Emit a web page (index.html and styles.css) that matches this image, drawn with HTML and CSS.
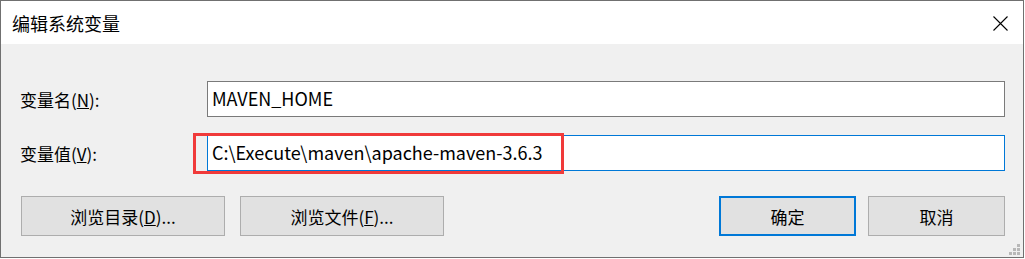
FILE: index.html
```html
<!DOCTYPE html>
<html lang="zh-CN">
<head>
<meta charset="UTF-8">
<title>编辑系统变量</title>
<link rel="stylesheet" href="styles.css">
</head>
<body>

<div class="dialog">
  <div class="titlebar">
    <span class="title">编辑系统变量</span>
    <svg class="close" width="15" height="15" viewBox="0 0 15 15">
      <path d="M0.5 0.5 L14.5 14.5 M14.5 0.5 L0.5 14.5" stroke="#000" stroke-width="1.1" fill="none"/>
    </svg>
  </div>

  <div class="content">
    <div class="row">
      <label class="label">变量名(<u>N</u>):</label>
      <div class="field">MAVEN_HOME</div>
    </div>
    <div class="row">
      <label class="label">变量值(<u>V</u>):</label>
      <div class="field focused">
        C:\Execute\maven\apache-maven-3.6.3
        <div class="mark"></div>
      </div>
    </div>

    <div class="buttons">
      <div class="left">
        <button class="btn wide">浏览目录(<u>D</u>)...</button>
        <button class="btn wide">浏览文件(<u>F</u>)...</button>
      </div>
      <div class="right">
        <button class="btn default">确定</button>
        <button class="btn">取消</button>
      </div>
    </div>
  </div>

  <svg class="grip" width="11" height="11" viewBox="0 0 11 11">
    <rect x="8" y="0" width="3" height="3" fill="#b8b8b8"/>
    <rect x="4" y="4" width="3" height="3" fill="#b8b8b8"/>
    <rect x="8" y="4" width="3" height="3" fill="#b8b8b8"/>
    <rect x="0" y="8" width="3" height="3" fill="#b8b8b8"/>
    <rect x="4" y="8" width="3" height="3" fill="#b8b8b8"/>
    <rect x="8" y="8" width="3" height="3" fill="#b8b8b8"/>
  </svg>
</div>

</body>
</html>
```

FILE: styles.css
```css
body {
  margin: 0;
  background: #fff;
  font-family: "Noto Sans CJK SC", "Noto Sans", sans-serif;
  color: #000;
}
.dialog {
  position: relative;
  width: 1024px;
  height: 258px;
  box-sizing: border-box;
  border: 1px solid #707070;
  background: #f0f0f0;
}
.titlebar {
  height: 43px;
  background: #fff;
  display: flex;
  align-items: center;
  justify-content: space-between;
  padding: 0 15px 0 11px;
}
.title {
  font-size: 18px;
  line-height: 24px;
  margin-top: 1px;
}
.close {
  display: block;
  margin-top: 2px;
}
.content {
  padding: 37px 18px 0 19px;
}
.row {
  display: flex;
  align-items: center;
  margin-bottom: 18px;
}
.label {
  width: 187px;
  font-size: 17px;
}
.field {
  position: relative;
  flex: 1;
  height: 36px;
  box-sizing: border-box;
  border: 1px solid #7a7a7a;
  background: #fff;
  font-size: 18px;
  line-height: 32px;
  padding-left: 4px;
  white-space: nowrap;
}
.field.focused {
  border-color: #0078d7;
}
.mark {
  position: absolute;
  left: -15px;
  top: -3px;
  width: 371px;
  height: 41px;
  box-sizing: border-box;
  border: 3px solid #f03a3a;
}
.buttons {
  display: flex;
  justify-content: space-between;
  margin-top: 25px;
  padding-left: 1px;
}
.left, .right {
  display: flex;
}
.left {
  gap: 15px;
}
.right {
  gap: 12px;
}
.btn {
  height: 40px;
  width: 137px;
  box-sizing: border-box;
  border: 1px solid #adadad;
  background: #e1e1e1;
  font-family: "Noto Sans CJK SC", "Noto Sans", sans-serif;
  font-size: 17px;
  color: #000;
  padding: 0;
}
.btn.wide {
  width: 204px;
}
.btn.default {
  border: 2px solid #0078d7;
}
.grip {
  position: absolute;
  right: 3px;
  bottom: 2px;
}
```
